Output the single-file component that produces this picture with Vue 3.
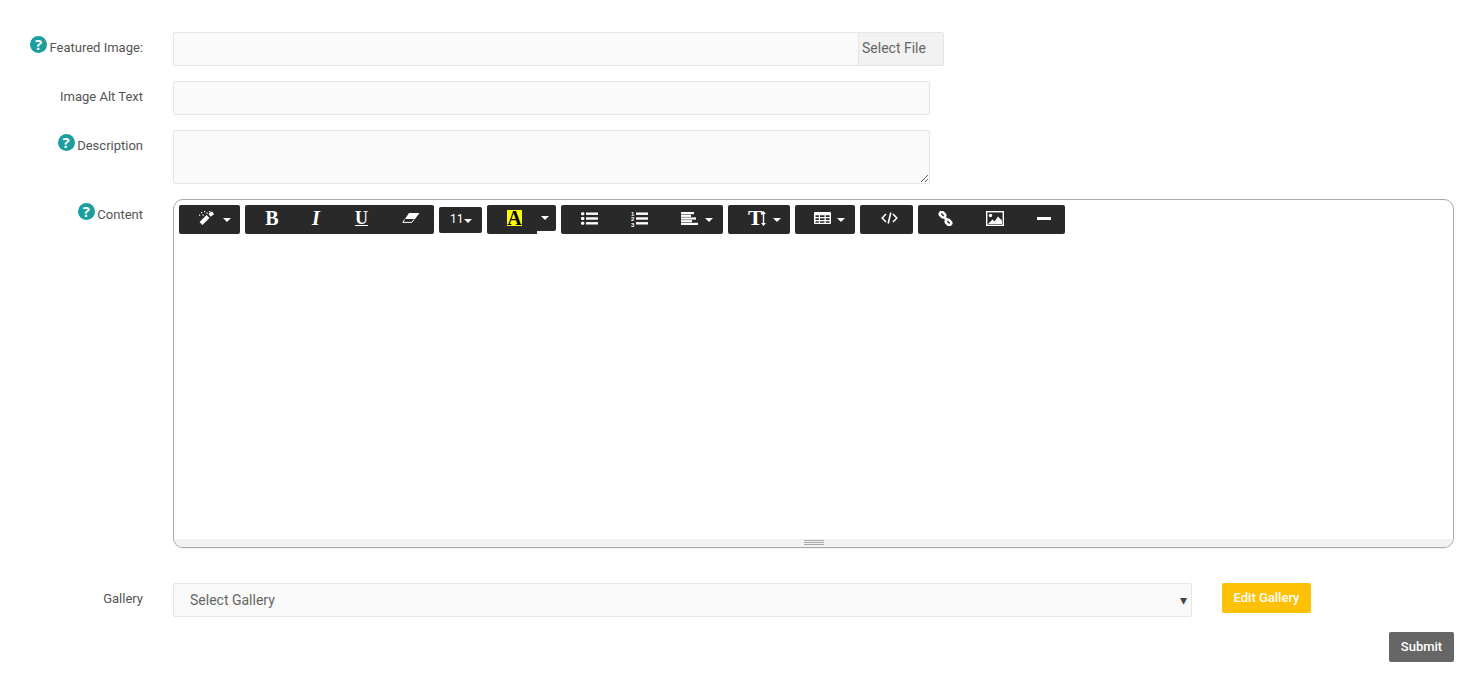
<script setup>
const groups = [
  { name: 'magic', items: [{ icon: 'wand', ml: 20 }, { caret: true, ml: 8 }] },
  {
    name: 'style',
    items: [
      { text: 'B', cls: 'serif bold', w: 14, ml: 20 },
      { text: 'I', cls: 'serif italic', w: 8, ml: 33 },
      { text: 'U', cls: 'serif under', w: 15, ml: 34 },
      { icon: 'eraser', ml: 33 }
    ]
  },
  { name: 'size', items: [{ text: '11', cls: 'num', w: 12, ml: 11 }, { caret: true, ml: 2 }] },
  {
    name: 'list',
    items: [
      { icon: 'ul', ml: 20 },
      { icon: 'ol', ml: 33 },
      { icon: 'align', ml: 33 },
      { caret: true, ml: 7 }
    ]
  },
  { name: 'para', items: [{ text: 'T', cls: 'serif bold big', w: 13, ml: 20 }, { icon: 'arrows', ml: 0 }, { caret: true, ml: 7 }] },
  { name: 'table', items: [{ icon: 'table', ml: 19 }, { caret: true, ml: 6 }] },
  { name: 'code', items: [{ icon: 'code', ml: 21 }] },
  {
    name: 'insert',
    items: [
      { icon: 'link', ml: 20 },
      { icon: 'picture', ml: 33 },
      { icon: 'minus', ml: 33 }
    ]
  }
]
const before = groups.slice(0, 3)
const after = groups.slice(3)
</script>

<template>
  <form class="page" @submit.prevent>
    <div class="row">
      <label class="label"><span class="help">?</span>Featured Image:</label>
      <div class="file">
        <input class="input file-input" type="text" />
        <span class="file-btn">Select File</span>
      </div>
    </div>

    <div class="row">
      <label class="label">Image Alt Text</label>
      <input class="input wide" type="text" />
    </div>

    <div class="row">
      <label class="label"><span class="help">?</span>Description</label>
      <textarea class="input wide area"></textarea>
    </div>

    <div class="row editor-row">
      <label class="label"><span class="help">?</span>Content</label>
      <div class="editor">
        <div class="toolbar">
          <template v-for="g in before" :key="g.name">
            <div class="group" :class="g.name">
              <template v-for="(it, i) in g.items" :key="i">
                <span v-if="it.caret" class="caret" :style="{ marginLeft: it.ml + 'px' }"></span>
                <span v-else-if="it.text" class="glyph" :class="it.cls" :style="{ marginLeft: it.ml + 'px', width: it.w + 'px' }">{{ it.text }}</span>
                <svg v-else-if="it.icon === 'wand'" :style="{ marginLeft: it.ml + 'px' }" width="16" height="14" viewBox="0 0 16 14">
                  <path d="M2 12.500 9 5.500" stroke="#fff" stroke-width="4" fill="none" />
                  <path d="M10.500 4.200 14 1.800" stroke="#fff" stroke-width="3.600" fill="none" />
                  <path d="M2 1h1.200v1.200H2zM5 0h1.200v1.200H5zM7.500 1.500h1.200v1.200H7.500zM0 3.500h1.200v1.200H0zM3.500 3.500h1.200v1.200H3.500zM10 0h1.200v1.200H10z" fill="#fff" />
                </svg>
                <svg v-else-if="it.icon === 'eraser'" :style="{ marginLeft: it.ml + 'px' }" width="18" height="10" viewBox="0 0 18 10">
                  <path d="M7 0h10.500L13 6H3z" fill="#fff" />
                  <path d="M2.500 6.500.8 9.400h9L12 6.500" fill="none" stroke="#fff" stroke-width="1" />
                </svg>
              </template>
            </div>
          </template>

          <div class="color">
            <div class="color-main"><span class="swatch">A</span></div>
            <div class="color-drop"><span class="caret"></span></div>
          </div>

          <template v-for="g in after" :key="g.name">
            <div class="group" :class="g.name">
              <template v-for="(it, i) in g.items" :key="i">
                <span v-if="it.caret" class="caret" :style="{ marginLeft: it.ml + 'px' }"></span>
                <span v-else-if="it.text" class="glyph" :class="it.cls" :style="{ marginLeft: it.ml + 'px', width: it.w + 'px' }">{{ it.text }}</span>
                <svg v-else-if="it.icon === 'ul'" :style="{ marginLeft: it.ml + 'px' }" width="17" height="13" viewBox="0 0 17 13" fill="#fff">
                  <rect y=".2" width="3.400" height="3" rx="1.200" /><rect y="5" width="3.400" height="3" rx="1.200" /><rect y="9.800" width="3.400" height="3" rx="1.200" />
                  <rect x="5" y=".5" width="12" height="2.400" /><rect x="5" y="5.300" width="12" height="2.400" /><rect x="5" y="10.100" width="12" height="2.400" />
                </svg>
                <svg v-else-if="it.icon === 'ol'" :style="{ marginLeft: it.ml + 'px' }" width="17" height="17" viewBox="0 0 17 17" fill="#fff">
                  <text x="0" y="5.500" class="mini">1</text><text x="0" y="11" class="mini">2</text><text x="0" y="16.500" class="mini">3</text>
                  <rect x="5" y="2.500" width="12" height="2.400" /><rect x="5" y="7.300" width="12" height="2.400" /><rect x="5" y="12.100" width="12" height="2.400" />
                </svg>
                <svg v-else-if="it.icon === 'align'" :style="{ marginLeft: it.ml + 'px' }" width="17" height="13" viewBox="0 0 17 13" fill="#fff">
                  <rect width="13" height="2.200" /><rect y="2.700" width="10" height="2.200" /><rect y="5.400" width="15" height="2.200" /><rect y="8.100" width="11" height="2.200" /><rect y="10.800" width="17" height="2.200" />
                </svg>
                <svg v-else-if="it.icon === 'arrows'" width="5" height="15" viewBox="0 0 5 15">
                  <path d="M2.500 0 5 3H3.200v9H5l-2.500 3L0 12h1.800V3H0z" fill="#fff" />
                </svg>
                <svg v-else-if="it.icon === 'table'" :style="{ marginLeft: it.ml + 'px' }" width="17" height="12" viewBox="0 0 17 12">
                  <rect width="17" height="12" rx="1" fill="#fff" />
                  <path d="M1.500 3.200h3.300v1.800H1.500zM6 3.200h4.500v1.800H6zM11.800 3.200h3.700v1.800h-3.700zM1.500 6.200h3.300v1.800H1.500zM6 6.200h4.500v1.800H6zM11.800 6.200h3.700v1.800h-3.700zM1.500 9.200h3.300v1.600H1.500zM6 9.200h4.500v1.600H6zM11.800 9.200h3.700v1.600h-3.700z" fill="#292929" />
                </svg>
                <svg v-else-if="it.icon === 'code'" :style="{ marginLeft: it.ml + 'px' }" width="17" height="12" viewBox="0 0 17 12" fill="none" stroke="#fff" stroke-width="1.600">
                  <path d="M5 2 1.200 6 5 10M12 2l3.800 4L12 10M9.800 .5 7.200 11.500" />
                </svg>
                <svg v-else-if="it.icon === 'link'" :style="{ marginLeft: it.ml + 'px' }" width="15" height="15" viewBox="0 0 15 15" fill="none" stroke="#fff" stroke-width="2.500">
                  <rect x="1.500" y="1.700" width="6" height="4" rx="2" transform="rotate(45 4.500 3.700)" />
                  <rect x="7.500" y="9.300" width="6" height="4" rx="2" transform="rotate(45 10.500 11.300)" />
                  <path d="M6.500 6.500 8.500 8.500" />
                </svg>
                <svg v-else-if="it.icon === 'picture'" :style="{ marginLeft: it.ml + 'px' }" width="18" height="15" viewBox="0 0 18 15">
                  <rect x=".7" y=".7" width="16.600" height="13.600" fill="none" stroke="#fff" stroke-width="1.400" />
                  <circle cx="4.500" cy="4.500" r="1.700" fill="#fff" />
                  <path d="M2 13 6.500 8.500 8.500 10.500 12 5.500 16 9.500V13z" fill="#fff" />
                </svg>
                <svg v-else-if="it.icon === 'minus'" :style="{ marginLeft: it.ml + 'px' }" width="14" height="3" viewBox="0 0 14 3">
                  <rect width="14" height="3" fill="#fff" />
                </svg>
              </template>
            </div>
          </template>
        </div>
        <div class="editable"></div>
        <div class="statusbar"><span class="grip"></span></div>
      </div>
    </div>

    <div class="row gallery-row">
      <label class="label">Gallery</label>
      <div class="select-wrap">
        <select class="input gallery">
          <option>Select Gallery</option>
        </select>
        <span class="select-arrow">▾</span>
      </div>
      <button type="button" class="btn edit">Edit Gallery</button>
    </div>

    <div class="actions">
      <button type="submit" class="btn submit">Submit</button>
    </div>
  </form>
</template>

<style scoped>
.page {
  padding: 32px 18px 17px 0;
  font-family: Roboto, sans-serif;
  color: #555;
}

.row {
  display: flex;
  align-items: flex-start;
  margin-bottom: 15px;
}

.label {
  flex: 0 0 143px;
  margin-right: 30px;
  display: flex;
  justify-content: flex-end;
  align-items: flex-start;
  font-size: 13px;
  line-height: 15px;
  padding-top: 8px;
}

.help {
  width: 17px;
  height: 17px;
  margin: -4px 2.500px 0 0;
  border-radius: 50%;
  background: #1a9e9e;
  color: #fff;
  font: 700 15px/17px "Open Sans", sans-serif;
  text-align: center;
}

.input {
  box-sizing: border-box;
  height: 34px;
  background: #fafafa;
  border: 1px solid #e6e6e6;
  border-radius: 2px;
  outline: none;
  font-family: Roboto, sans-serif;
}

.wide {
  width: 757px;
}

.area {
  display: block;
  height: 54px;
  padding: 0;
}

.file {
  display: flex;
  width: 771px;
}

.file-input {
  flex: 1;
  min-width: 0;
  border-right: 0;
  border-radius: 2px 0 0 2px;
}

.file-btn {
  box-sizing: border-box;
  width: 86px;
  height: 34px;
  padding-left: 3px;
  background: #f2f2f2;
  border: 1px solid #e6e6e6;
  border-radius: 0 2px 2px 0;
  color: #666;
  font-size: 14px;
  line-height: 30px;
}

.editor-row {
  margin-bottom: 35px;
}

.editor {
  box-sizing: border-box;
  width: 1281px;
  height: 349px;
  display: flex;
  flex-direction: column;
  border: 1px solid #a9a9a9;
  border-radius: 10px;
  overflow: hidden;
  box-shadow: 0 1px 1px rgba(0, 0, 0, 0.06);
}

.toolbar {
  display: flex;
  align-items: flex-start;
  gap: 5px;
  padding: 5px 5px 0;
}

.group {
  box-sizing: border-box;
  height: 29px;
  padding-bottom: 3px;
  display: flex;
  align-items: center;
  background: #292929;
  border-radius: 2px;
  color: #fff;
}

.magic { width: 61px; }
.style { width: 189px; }
.size { width: 43px; height: 26px; margin-top: 2px; padding-bottom: 2px; }
.list { width: 162px; }
.para { width: 62px; }
.table { width: 60px; }
.code { width: 53px; }
.insert { width: 147px; }

.glyph {
  display: block;
  text-align: center;
  line-height: 1;
}

.serif {
  font-family: "Liberation Serif", serif;
  font-size: 20px;
  font-weight: 700;
}

.italic {
  font-style: italic;
}

.under {
  font-size: 18px;
  text-decoration: underline;
}

.big {
  font-size: 22px;
}

.num {
  font-size: 12px;
}

.caret {
  flex: none;
  width: 0;
  height: 0;
  margin-top: 4px;
  border-top: 4px solid #fff;
  border-left: 4px solid transparent;
  border-right: 4px solid transparent;
}

.mini {
  font: 700 6px "Liberation Sans", sans-serif;
}

.color {
  display: flex;
  align-items: flex-start;
}

.color-main {
  width: 50px;
  height: 29px;
  display: flex;
  align-items: center;
  padding: 0 0 3px 20px;
  box-sizing: border-box;
  background: #292929;
  border-radius: 2px 0 0 2px;
}

.swatch {
  width: 15px;
  height: 16px;
  background: #ffff00;
  color: #000;
  font: 700 20px/17px "Liberation Serif", serif;
  text-align: center;
}

.color-drop {
  width: 19px;
  height: 26px;
  display: flex;
  align-items: center;
  justify-content: center;
  padding: 0 3px 5px 0;
  box-sizing: border-box;
  background: #292929;
  border-radius: 0 2px 2px 0;
}

.editable {
  flex: 1;
}

.statusbar {
  height: 8px;
  display: flex;
  justify-content: center;
  background: #f2f2f2;
}

.grip {
  width: 20px;
  height: 5px;
  margin-top: 1px;
  border-top: 1px solid #a9a9a9;
  border-bottom: 1px solid #a9a9a9;
  box-sizing: border-box;
  background: linear-gradient(#a9a9a9, #a9a9a9) center / 100% 1px no-repeat;
}

.select-wrap {
  position: relative;
  width: 1019px;
}

.gallery {
  width: 100%;
  display: block;
  appearance: none;
  padding-left: 16px;
  color: #666;
  font-size: 14px;
}

.select-arrow {
  position: absolute;
  right: 5px;
  top: 8px;
  color: #444;
  font: 14px/18px "DejaVu Sans", sans-serif;
  pointer-events: none;
}

.btn {
  height: 30px;
  border: 0;
  border-radius: 2px;
  color: #fff;
  font: 500 13px Roboto, sans-serif;
  padding: 0 0 2px;
}

.edit {
  width: 89px;
  margin-left: 30px;
  background: #ffc107;
}

.actions {
  display: flex;
  justify-content: flex-end;
}

.submit {
  width: 65px;
  background: #666;
}
</style>
